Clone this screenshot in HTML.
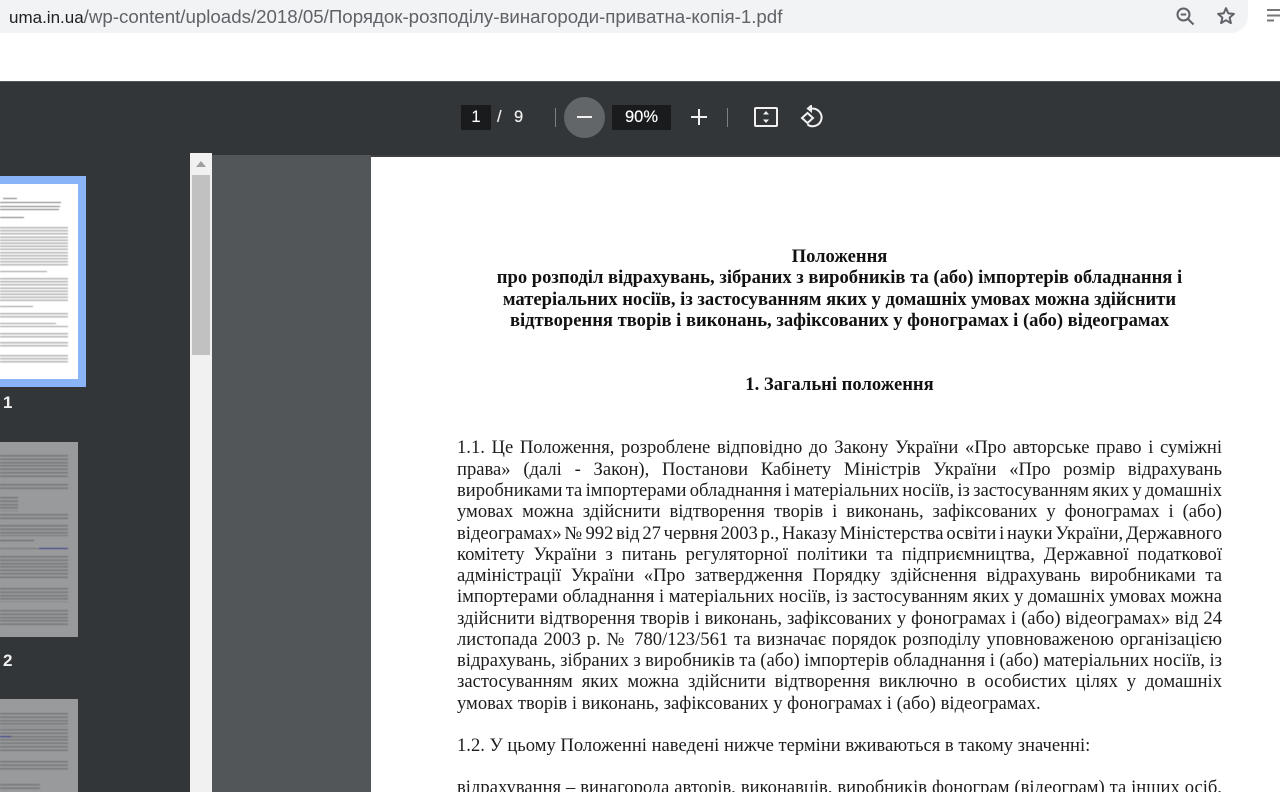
<!DOCTYPE html>
<html lang="uk">
<head>
<meta charset="utf-8">
<title>PDF</title>
<style>
html,body{margin:0;padding:0;width:1280px;height:792px;overflow:hidden;background:#fff}
.a{position:absolute}
#wrap{position:relative;width:1280px;height:792px;overflow:hidden;font-family:"Liberation Sans",sans-serif}
.l{position:absolute;left:457px;width:765px;margin-top:1px;font:18.6px/21px "Liberation Serif",serif;color:#1c1c1c;white-space:nowrap;text-align:justify;text-align-last:justify;word-spacing:-2.5px;filter:blur(.3px)}
.n{text-align-last:left;word-spacing:0}
.h{position:absolute;left:457px;width:765px;margin-top:1px;text-align:center;font:bold 18.6px/21px "Liberation Serif",serif;color:#111;white-space:nowrap;filter:blur(.3px)}
.b{position:absolute;height:1.4px;background:#9a9a9a}
.s{position:absolute;left:0;width:68px;background:repeating-linear-gradient(#b4b4b4 0 1.5px,#fff 1.5px 3.1px)}
.r{position:absolute;left:0;width:68px;background:repeating-linear-gradient(#75777a 0 1.5px,#989a9b 1.5px 3.4px)}
.t{color:#f1f1f1;font:16.5px/25px 'Liberation Sans',sans-serif;text-shadow:0 0 .4px #f1f1f1}
</style>
</head>
<body>
<div id="wrap">
<!-- address bar -->
<div class="a" style="left:-30px;top:0;width:1278px;height:33px;background:#f1f3f4;border-radius:0 0 17px 17px"></div>
<div class="a" style="left:9px;top:7px;font:18.7px/20px 'Liberation Sans',sans-serif;color:#5f6368;white-space:nowrap;filter:blur(.25px)"><span style="color:#202124;font-size:17px">uma.in.ua</span>/wp-content/uploads/2018/05/Порядок-розподілу-винагороди-приватна-копія-1.pdf</div>
<svg class="a" style="left:1175px;top:6px" width="20" height="20" viewBox="0 0 20 20" fill="none" stroke="#5f6368" stroke-width="2"><circle cx="8.5" cy="8.5" r="6"/><path d="M13 13l5.5 5.5M5.8 8.5h5.4"/></svg>
<svg class="a" style="left:1216px;top:6px" width="20" height="20" viewBox="0 0 20 20" fill="none" stroke="#5f6368" stroke-width="2" stroke-linejoin="round"><path d="M10 2.2l2.3 5.2 5.6.5-4.3 3.7 1.3 5.5L10 14.2 5.1 17.1l1.3-5.5L2.1 7.9l5.6-.5z"/></svg>
<svg class="a" style="left:1267px;top:8px" width="13" height="16" viewBox="0 0 13 16" fill="none" stroke="#777" stroke-width="2"><path d="M0 2h14M0 7.5h14M0 12.500h7"/></svg>

<!-- toolbar -->
<div class="a" style="left:0;top:81px;width:1280px;height:74px;background:#323639;border-top:1px solid #55585a;box-sizing:border-box"></div>
<div class="a" style="left:371px;top:155px;width:909px;height:2px;background:#3c4043"></div>
<div class="a t" style="left:461px;top:105px;width:30px;height:25px;background:#191b1c;color:#fff;text-align:center">1</div>
<div class="a t" style="left:497px;top:105px">/</div>
<div class="a t" style="left:514px;top:105px">9</div>
<div class="a" style="left:555px;top:108px;width:1px;height:19px;background:#7e8183"></div>
<div class="a" style="left:564px;top:97px;width:41px;height:41px;border-radius:50%;background:#636669"></div>
<div class="a" style="left:577px;top:116px;width:15px;height:2px;background:#f1f1f1"></div>
<div class="a t" style="left:612px;top:105px;width:59px;height:25px;background:#191b1c;color:#fff;text-align:center">90%</div>
<div class="a" style="left:691px;top:116px;width:16px;height:2px;background:#f1f1f1"></div>
<div class="a" style="left:698px;top:109px;width:2px;height:16px;background:#f1f1f1"></div>
<div class="a" style="left:727px;top:108px;width:1px;height:19px;background:#7e8183"></div>
<svg class="a" style="left:754px;top:107px" width="24" height="20" viewBox="0 0 24 20" fill="none"><rect x="1" y="1" width="22" height="18" rx="1" stroke="#f1f1f1" stroke-width="2"/><path d="M12 4l3 3.500H9zM12 16l3-3.500H9z" fill="#f1f1f1"/></svg>
<svg class="a" style="left:800px;top:105px" width="25" height="25" viewBox="0 0 25 25" fill="none" stroke="#f1f1f1" stroke-width="2"><path d="M8 3.500l3-2.500v5zM11 3.800a8.800 8.800 0 1 1-3.600 15.600"/><path d="M7.500 8L2 13l5.500 5 5.500-5z"/></svg>

<!-- side panel -->
<div class="a" style="left:0;top:155px;width:190px;height:637px;background:#323639"></div>
<div class="a" style="left:190px;top:153px;width:22px;height:639px;background:#f1f1f1"></div>
<div class="a" style="left:212px;top:155px;width:159px;height:637px;background:#525659"></div>
<div class="a" style="left:192px;top:175px;width:18px;height:180px;background:#c1c1c1"></div>
<div class="a" style="left:196px;top:161px;width:0;height:0;border-left:5px solid transparent;border-right:5px solid transparent;border-bottom:6px solid #a0a0a0"></div>

<!-- thumb 1 -->
<div class="a" style="left:0;top:176px;width:86px;height:211px;background:#8ab4f8"></div>
<div class="a" style="left:0;top:184px;width:78px;height:195px;background:#fff"></div>
<div style="position:absolute;left:0;top:0;filter:blur(.4px)">
<div class="b" style="left:3px;top:198px;width:14px;background:#777"></div>
<div class="b" style="left:0;top:202px;width:61px;background:#777"></div>
<div class="b" style="left:0;top:206px;width:60px;background:#777"></div>
<div class="b" style="left:0;top:209px;width:59px;background:#777"></div>
<div class="b" style="left:0;top:217px;width:24px;background:#777"></div>
<div class="s" style="top:227px;height:40px"></div>
<div class="b" style="left:0;top:271px;width:47px"></div>
<div class="s" style="top:278px;height:24px"></div>
<div class="b" style="left:0;top:306px;width:33px"></div>
<div class="s" style="top:313px;height:5px"></div>
<div class="b" style="left:0;top:323px;width:56px"></div>
<div class="b" style="left:0;top:326px;width:68px"></div>
<div class="s" style="top:333px;height:5px"></div>
<div class="s" style="top:342px;height:6px"></div>
<div class="s" style="top:355px;height:8px"></div>
</div>
<div class="a" style="left:3px;top:394px;color:#f1f1f1;font:bold 17px/18px 'Liberation Sans',sans-serif">1</div>

<!-- thumb 2 -->
<div class="a" style="left:0;top:442px;width:78px;height:195px;background:#989a9b"></div>
<div style="position:absolute;left:0;top:0;filter:blur(.4px)">
<div class="r" style="top:455px;height:24px"></div>
<div class="r" style="top:484px;height:7px"></div>
<div class="r" style="top:497px;width:18px;height:14px"></div>
<div class="r" style="top:514px;height:7px"></div>
<div class="r" style="top:525px;height:11px"></div>
<div class="b" style="left:0;top:540px;width:34px;background:#666"></div>
<div class="b" style="left:0;top:548px;width:39px;background:#75777a"></div>
<div class="b" style="left:39px;top:548px;width:29px;background:#3a3a90"></div>
<div class="r" style="top:556px;height:24px"></div>
<div class="r" style="top:588px;height:14px"></div>
<div class="r" style="top:610px;height:15px"></div>
</div>
<div class="a" style="left:3px;top:652px;color:#f1f1f1;font:bold 17px/18px 'Liberation Sans',sans-serif">2</div>

<!-- thumb 3 -->
<div class="a" style="left:0;top:699px;width:78px;height:93px;background:#989a9b"></div>
<div style="position:absolute;left:0;top:0;filter:blur(.4px)">
<div class="r" style="top:713px;height:14px"></div>
<div class="r" style="top:729px;height:24px"></div>
<div class="b" style="left:0;top:736px;width:11px;background:#3a3a90"></div>
<div class="r" style="top:761px;height:10px"></div>
<div class="r" style="top:784px;width:40px;height:6px"></div>
</div>

<!-- page -->
<div class="a" style="left:371px;top:157px;width:909px;height:635px;background:#fff"></div>
<div class="h" style="top:245px">Положення</div>
<div class="h" style="top:266px">про розподіл відрахувань, зібраних з виробників та (або) імпортерів обладнання і</div>
<div class="h" style="top:288px">матеріальних носіїв, із застосуванням яких у домашніх умовах можна здійснити</div>
<div class="h" style="top:309px">відтворення творів і виконань, зафіксованих у фонограмах і (або) відеограмах</div>
<div class="h" style="top:373px">1. Загальні положення</div>

<div class="l" style="top:436px">1.1. Це Положення, розроблене відповідно до Закону України «Про авторське право і суміжні</div>
<div class="l" style="top:458px">права» (далі - Закон), Постанови Кабінету Міністрів України «Про розмір відрахувань</div>
<div class="l" style="top:479px">виробниками та імпортерами обладнання і матеріальних носіїв, із застосуванням яких у домашніх</div>
<div class="l" style="top:500px">умовах можна здійснити відтворення творів і виконань, зафіксованих у фонограмах і (або)</div>
<div class="l" style="top:522px">відеограмах» № 992 від 27 червня 2003 р., Наказу Міністерства освіти і науки України, Державного</div>
<div class="l" style="top:543px">комітету України з питань регуляторної політики та підприємництва, Державної податкової</div>
<div class="l" style="top:564px">адміністрації України «Про затвердження Порядку здійснення відрахувань виробниками та</div>
<div class="l" style="top:585px">імпортерами обладнання і матеріальних носіїв, із застосуванням яких у домашніх умовах можна</div>
<div class="l" style="top:607px">здійснити відтворення творів і виконань, зафіксованих у фонограмах і (або) відеограмах» від 24</div>
<div class="l" style="top:628px">листопада 2003 р. № 780/123/561 та визначає порядок розподілу уповноваженою організацією</div>
<div class="l" style="top:649px">відрахувань, зібраних з виробників та (або) імпортерів обладнання і (або) матеріальних носіїв, із</div>
<div class="l" style="top:670px">застосуванням яких можна здійснити відтворення виключно в особистих цілях у домашніх</div>
<div class="l n" style="top:692px">умовах творів і виконань, зафіксованих у фонограмах і (або) відеограмах.</div>
<div class="l n" style="top:734px">1.2. У цьому Положенні наведені нижче терміни вживаються в такому значенні:</div>
<div class="l" style="top:776px">відрахування – винагорода авторів, виконавців, виробників фонограм (відеограм) та інших осіб,</div>
</div>
</body>
</html>
